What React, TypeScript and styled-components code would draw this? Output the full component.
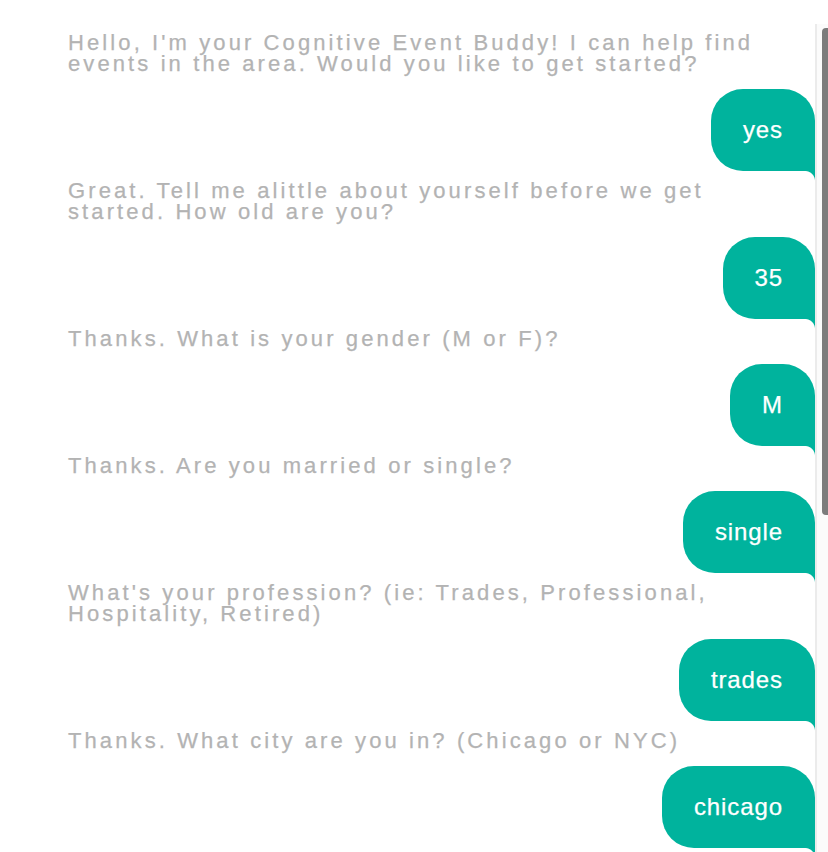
import React from "react";
import styled, { createGlobalStyle } from "styled-components";

const GlobalStyle = createGlobalStyle`
  html, body {
    margin: 0;
    padding: 0;
    background: #ffffff;
    overflow: hidden;
  }
`;

const TEAL = "#00b39d";
const GREY = "#b3b3b3";

const Page = styled.div`
  display: flex;
  width: 828px;
  height: 852px;
  overflow: hidden;
  background: #ffffff;
`;

const Chat = styled.div`
  flex: 1;
  min-width: 0;
  display: flex;
  flex-direction: column;
  padding: 32px 0 0 68px;
`;

const BotText = styled.p`
  margin: 0 0 15px;
  max-width: 715px;
  font-family: "Liberation Sans", Arial, sans-serif;
  font-size: 22px;
  line-height: 21px;
  letter-spacing: 3.1px;
  color: ${GREY};
  -webkit-text-stroke: 0.25px ${GREY};
`;

const Bubble = styled.div`
  position: relative;
  align-self: flex-end;
  margin: 0 0 9px;
  padding: 27px 32px;
  background: ${TEAL};
  color: #ffffff;
  font-family: "Liberation Sans", Arial, sans-serif;
  font-size: 24px;
  line-height: 28px;
  letter-spacing: 0.9px;
  -webkit-text-stroke: 0.25px #ffffff;
  border-radius: 32px 32px 0 32px;

  &::after {
    content: "";
    position: absolute;
    right: 0;
    top: 100%;
    width: 10px;
    height: 10px;
    background: radial-gradient(circle at 0 100%, transparent 9.5px, ${TEAL} 10.5px);
  }
`;

const Track = styled.div`
  flex: none;
  width: 13px;
  box-sizing: border-box;
  margin-top: 24px;
  padding-top: 4px;
  border-left: 2px solid #ebebeb;
  background: #fbfbfb;
  display: flex;
  justify-content: flex-end;
  align-items: flex-start;
`;

const Thumb = styled.div`
  width: 6px;
  height: 487px;
  background: #7c7c7c;
  border-radius: 4px 0 0 4px;
`;

type Turn = { bot: string; user: string };

const turns: Turn[] = [
  {
    bot: "Hello, I'm your Cognitive Event Buddy! I can help find events in the area. Would you like to get started?",
    user: "yes",
  },
  {
    bot: "Great. Tell me alittle about yourself before we get started. How old are you?",
    user: "35",
  },
  { bot: "Thanks. What is your gender (M or F)?", user: "M" },
  { bot: "Thanks. Are you married or single?", user: "single" },
  {
    bot: "What's your profession? (ie: Trades, Professional, Hospitality, Retired)",
    user: "trades",
  },
  { bot: "Thanks. What city are you in? (Chicago or NYC)", user: "chicago" },
];

export default function App() {
  return (
    <>
      <GlobalStyle />
      <Page>
        <Chat>
          {turns.map((t, i) => (
            <React.Fragment key={i}>
              <BotText>{t.bot}</BotText>
              <Bubble>{t.user}</Bubble>
            </React.Fragment>
          ))}
        </Chat>
        <Track>
          <Thumb />
        </Track>
      </Page>
    </>
  );
}
